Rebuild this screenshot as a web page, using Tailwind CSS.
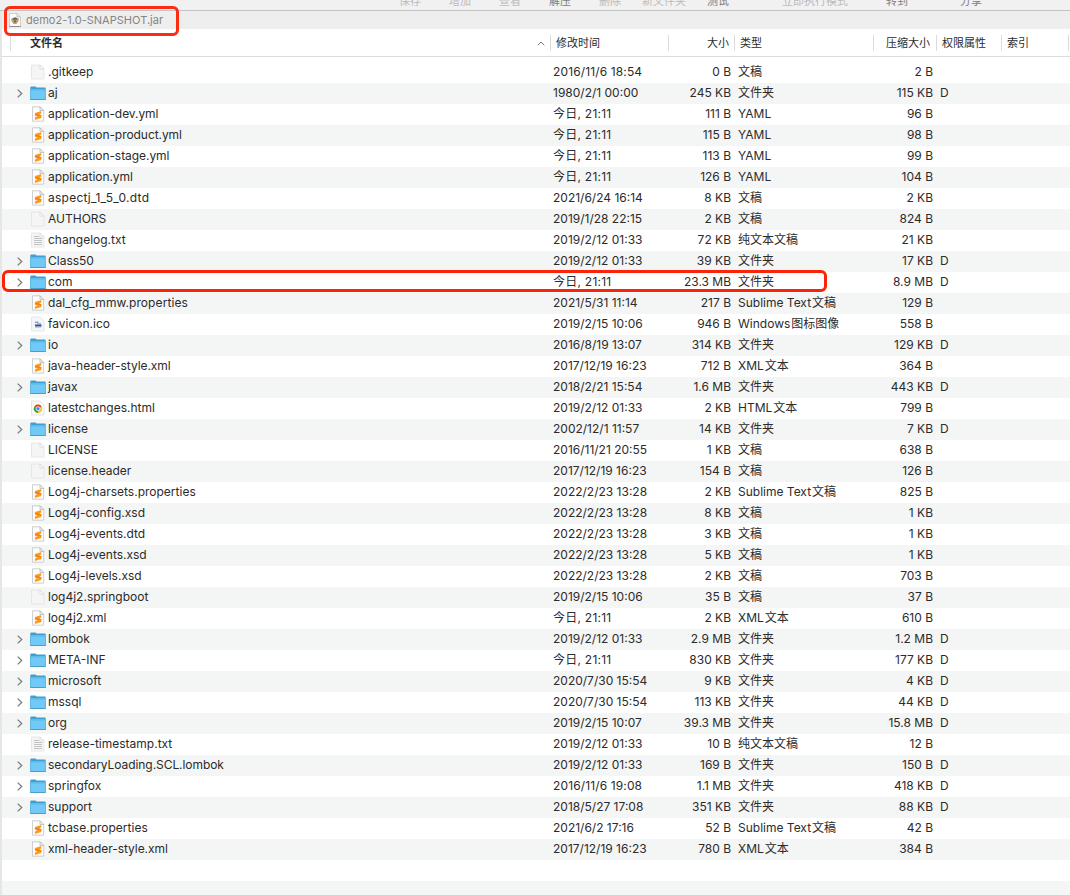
<!DOCTYPE html>
<html lang="zh-CN">
<head>
<meta charset="utf-8">
<title>demo2-1.0-SNAPSHOT.jar</title>
<script src="https://cdn.jsdelivr.net/npm/@tailwindcss/browser@4"></script>
</head>
<body class="w-[1070px] h-[895px] overflow-hidden bg-white font-[Inter,'Noto_Sans_CJK_SC',sans-serif] text-[12px] text-[#2b2b2b] relative">
<svg class="hidden">
  <symbol id="folder" viewBox="0 0 16 16">
    <path d="M.3 3V1.500q0-1 1-1h4l1.300 1H14.700q1 0 1 1V14H.3z" fill="#3f9fd0"/>
    <path d="M.3 4.200h15.400v9.300H.3z" fill="#70c9f6"/>
    <path d="M.3 3.500h15.400" stroke="#5fbcea"/>
    <path d="M.3 13.500h15.400" stroke="#4a9fc9"/>
    <path d="M.6 3v11M15.400 3v11" stroke="#5ab0da" stroke-width=".6"/>
  </symbol>
  <symbol id="page" viewBox="0 0 16 16">
    <path d="M1.500 1h8.500l4 4v10H1.500z" fill="#f5f5f5" stroke="#e2e2e2" stroke-width=".8"/>
    <path d="M10 1v4h4z" fill="#fff" stroke="#cccccc" stroke-width=".6"/>
  </symbol>
  <symbol id="text" viewBox="0 0 16 16">
    <use href="#page"/>
    <path d="M4 4.500h5M4 6.500h8M4 8.500h8M4 10.500h8M4 12.500h8" stroke="#bcbcbc" stroke-width=".9"/>
  </symbol>
  <symbol id="sublime" viewBox="0 0 16 16">
    <path d="M2.500.8h7.500l3.700 3.700v10.700H2.500z" fill="#fdfdfd" stroke="#c4c4c4" stroke-width=".8"/>
    <path d="M10 .8v3.700h3.700z" fill="#f2f2f2" stroke="#aaa" stroke-width=".6"/>
    <path d="M11.300 4.900v2.600L9 8.400l2.300.9v2.600l-6.400 2v-2.500l2.300-.9-2.300-.8V7z" fill="#ff9a1c"/>
    <path d="M4.900 8.700l6.400 2V9.300L6.500 7.700z" fill="#ee8010"/>
  </symbol>
  <symbol id="image" viewBox="0 0 16 16">
    <path d="M1.500 1h8.500l4 4v10H1.500z" fill="#f4f6f9" stroke="#e0e2e6" stroke-width=".8"/>
    <path d="M5 5.500h3.500v1.500H5zM7 7.200h4v1H7z" fill="#8ba3bb"/>
    <path d="M5 8.500h6.500v2H5z" fill="#2f4f9e"/>
    <path d="M5 11.500h6" stroke="#b9c3d2" stroke-width=".8"/>
  </symbol>
  <symbol id="chrome" viewBox="0 0 16 16">
    <path d="M1.500 1h8.500l4 4v10H1.500z" fill="#f8f8f8" stroke="#dedede" stroke-width=".8"/>
    <circle cx="8" cy="8.700" r="4.200" fill="#f8c42c"/>
    <path d="M8 8.700L4.360 6.600A4.200 4.200 0 0 1 11.640 6.600z" fill="#dc4637"/>
    <path d="M8 8.700L4.360 6.600A4.200 4.200 0 0 0 8 12.900z" fill="#2ba24c"/>
    <circle cx="8" cy="8.700" r="2" fill="#4285f4" stroke="#fff" stroke-width=".7"/>
  </symbol>
  <symbol id="jar" viewBox="0 0 12 14">
    <path d="M.5.500h7.500L11.500 4v9.500H.5z" fill="#fbfbfb" stroke="#c6c6c6" stroke-width=".8"/>
    <path d="M.2 13.500h11.600" stroke="#8d8d8d"/>
    <path d="M8 .5V4h3.500" fill="#e6e6e6" stroke="#aaa" stroke-width=".6"/>
    <path d="M2.300 5.500h7.400v2.300L7.500 11h-3L2.300 7.800z" fill="#c39d67"/>
    <path d="M3.300 5.200L6 4.300l2.700.9L7.500 7h-3z" fill="#5b6f80"/>
    <path d="M5 7.500h2v1.800H5z" fill="#80623d"/>
  </symbol>
</svg>

<div class="h-[11px] bg-[#f1f1f1] border-b border-[#c3c3c3] overflow-hidden flex items-end pl-[399px] text-[11px] text-[#bcbcbc] whitespace-nowrap">
  <div class="flex leading-[16px] mb-[1px]">
    <span class="w-[50px]">保存</span><span class="w-[50px]">增加</span><span class="w-[50px]">查看</span><span class="w-[50px] text-[#808080]">解压</span><span class="w-[43px]">删除</span><span class="w-[65px]">新文件夹</span><span class="w-[75px] text-[#808080]">测试</span><span class="w-[104px]">立即执行模式</span><span class="w-[74px] text-[#808080]">转到</span><span class="text-[#808080]">分享</span>
  </div>
</div>

<div class="border-l-2 border-[#e6e6e6] h-[884px]">
  <div class="h-[18px] bg-[#eeeeee] flex items-center pl-[7px] text-[11px] text-[#848484]">
    <svg class="w-3 h-[14px] mr-[5px]"><use href="#jar"/></svg>
    <span class="whitespace-nowrap tracking-[0.02px]">demo2-1.0-SNAPSHOT.jar</span>
  </div>
  <div class="h-[28px] border-b border-[#dcdcdc] flex items-center text-[11px] pl-2">
    <div class="w-[541px] h-4 border-x border-[#dcdcdc] flex items-center justify-between pl-[19px] pr-[5px]">
      <b class="font-bold pt-[2px]">文件名</b>
      <svg class="w-2 h-[5px] mt-0.5" viewBox="0 0 8 5" fill="none" stroke="#777"><path d="M.7 4.300L4 1l3.300 3.300"/></svg>
    </div>
    <div class="w-[118px] h-4 border-r border-[#dcdcdc] flex items-center pt-[2px] pl-[5px]">修改时间</div>
    <div class="w-[66px] h-4 border-r border-[#dcdcdc] flex items-center pt-[2px] justify-end pr-[5px]">大小</div>
    <div class="w-[139px] h-4 border-r border-[#dcdcdc] flex items-center pt-[2px] pl-[5px]">类型</div>
    <div class="w-[63px] h-4 border-r border-[#dcdcdc] flex items-center pt-[2px] justify-end pr-[6px]">压缩大小</div>
    <div class="w-[65px] h-4 border-r border-[#dcdcdc] flex items-center pt-[2px] pl-[5px]">权限属性</div>
    <div class="w-[67px] h-4 border-r border-[#dcdcdc] flex items-center pt-[2px] pl-[5px]">索引</div>
  </div>
  <div id="rows" class="pt-[5px]"></div>
</div>

<div class="absolute left-[4px] top-[6px] w-[175px] h-[30px] border-[3px] border-[#fb2c12] rounded-[6px]"></div>
<div class="absolute left-[2px] top-[270px] w-[825px] h-[22px] border-[3px] border-[#fb2408] rounded-[6px]"></div>

<script>
const files = `page|.gitkeep|2016/11/6 18:54|0 B|文稿|2 B
folder|aj|1980/2/1 00:00|245 KB|文件夹|115 KB
sublime|application-dev.yml|今日, 21:11|111 B|YAML|96 B
sublime|application-product.yml|今日, 21:11|115 B|YAML|98 B
sublime|application-stage.yml|今日, 21:11|113 B|YAML|99 B
sublime|application.yml|今日, 21:11|126 B|YAML|104 B
sublime|aspectj_1_5_0.dtd|2021/6/24 16:14|8 KB|文稿|2 KB
page|AUTHORS|2019/1/28 22:15|2 KB|文稿|824 B
text|changelog.txt|2019/2/12 01:33|72 KB|纯文本文稿|21 KB
folder|Class50|2019/2/12 01:33|39 KB|文件夹|17 KB
folder|com|今日, 21:11|23.3 MB|文件夹|8.9 MB
sublime|dal_cfg_mmw.properties|2021/5/31 11:14|217 B|Sublime Text文稿|129 B
image|favicon.ico|2019/2/15 10:06|946 B|Windows图标图像|558 B
folder|io|2016/8/19 13:07|314 KB|文件夹|129 KB
sublime|java-header-style.xml|2017/12/19 16:23|712 B|XML文本|364 B
folder|javax|2018/2/21 15:54|1.6 MB|文件夹|443 KB
chrome|latestchanges.html|2019/2/12 01:33|2 KB|HTML文本|799 B
folder|license|2002/12/1 11:57|14 KB|文件夹|7 KB
page|LICENSE|2016/11/21 20:55|1 KB|文稿|638 B
page|license.header|2017/12/19 16:23|154 B|文稿|126 B
sublime|Log4j-charsets.properties|2022/2/23 13:28|2 KB|Sublime Text文稿|825 B
sublime|Log4j-config.xsd|2022/2/23 13:28|8 KB|文稿|1 KB
sublime|Log4j-events.dtd|2022/2/23 13:28|3 KB|文稿|1 KB
sublime|Log4j-events.xsd|2022/2/23 13:28|5 KB|文稿|1 KB
sublime|Log4j-levels.xsd|2022/2/23 13:28|2 KB|文稿|703 B
page|log4j2.springboot|2019/2/15 10:06|35 B|文稿|37 B
sublime|log4j2.xml|今日, 21:11|2 KB|XML文本|610 B
folder|lombok|2019/2/12 01:33|2.9 MB|文件夹|1.2 MB
folder|META-INF|今日, 21:11|830 KB|文件夹|177 KB
folder|microsoft|2020/7/30 15:54|9 KB|文件夹|4 KB
folder|mssql|2020/7/30 15:54|113 KB|文件夹|44 KB
folder|org|2019/2/15 10:07|39.3 MB|文件夹|15.8 MB
text|release-timestamp.txt|2019/2/12 01:33|10 B|纯文本文稿|12 B
folder|secondaryLoading.SCL.lombok|2019/2/12 01:33|169 B|文件夹|150 B
folder|springfox|2016/11/6 19:08|1.1 MB|文件夹|418 KB
folder|support|2018/5/27 17:08|351 KB|文件夹|88 KB
sublime|tcbase.properties|2021/6/2 17:16|52 B|Sublime Text文稿|42 B
sublime|xml-header-style.xml|2017/12/19 16:23|780 B|XML文本|384 B`.split('\n').map(l => l.split('|'));
const chevron = '<svg class="w-[6px] h-[9px]" viewBox="0 0 6 9" fill="none" stroke="#7c7c7c" stroke-width="1.300"><path d="M.7 .6L4.700 4.500L.7 8.400"/></svg>';
const nameTracking = n => n.includes('1_5_0') ? 'tracking-[0.26px]' : n.includes('_') ? 'tracking-[0.08px]' : /\.(xml|yml|lombok)$/.test(n) ? 'tracking-[-0.06px]' : '';
const dateTracking = d => d.startsWith('今') ? 'tracking-[0.25px]' : d.startsWith('2016/11/6') ? 'tracking-[0.13px]' : '';
const row = ([icon, name, date, size, type, packed]) => `<div class="h-[21px] flex items-center whitespace-nowrap even:bg-[#f4f5f5]">
  <div class="w-7 pl-[15px]">${icon === 'folder' ? chevron : ''}</div>
  <svg class="w-4 h-4 mr-[2px] ${icon === 'folder' ? 'mt-px' : 'mb-px'}"><use href="#${icon}"/></svg>
  <div class="w-[505px] pb-[2px] ${nameTracking(name)}">${name}</div>
  <div class="w-[118px] pb-[2px] ${dateTracking(date)}">${date}</div>
  <div class="w-[60px] pb-[2px] text-right">${size}</div>
  <div class="w-[140px] pb-[2px] pl-[7px]">${type.replace(/^([A-Z].*[a-zA-Z])(?=[^\x00-\x7f])/, '$1<span class="pl-px"></span>')}</div>
  <div class="w-[62px] pb-[2px] text-right">${packed}</div>
  <div class="pb-[2px] pl-[7px]">${icon === 'folder' ? 'D' : ''}</div>
</div>`;
document.getElementById('rows').innerHTML = files.map(row).join('') + '<div class="h-[21px]"></div><div class="h-[21px] bg-[#f4f5f5]"></div>';
</script>
</body>
</html>
